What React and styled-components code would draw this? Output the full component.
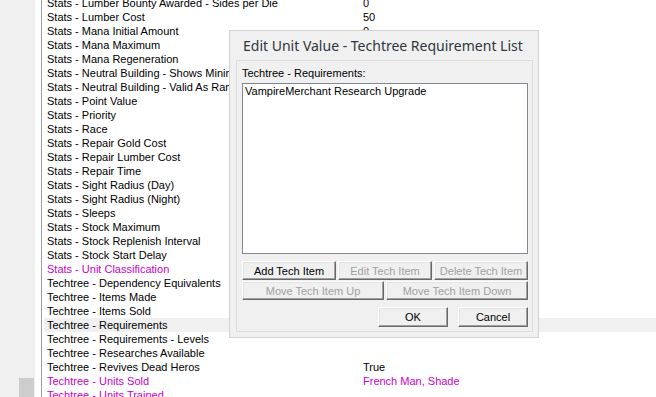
import React from 'react'
import styled, { createGlobalStyle } from 'styled-components'

const GlobalStyle = createGlobalStyle`
  html, body {
    margin: 0;
    padding: 0;
    background: #ffffff;
    overflow: hidden;
  }
  body {
    width: 656px;
    height: 397px;
    font-family: "Liberation Sans", Arial, sans-serif;
    font-size: 11px;
  }
`

const fields = [
  { name: 'Stats - Lumber Bounty Awarded - Sides per Die', value: '0' },
  { name: 'Stats - Lumber Cost', value: '50' },
  { name: 'Stats - Mana Initial Amount', value: '0' },
  { name: 'Stats - Mana Maximum' },
  { name: 'Stats - Mana Regeneration' },
  { name: 'Stats - Neutral Building - Shows Minimap Icon' },
  { name: 'Stats - Neutral Building - Valid As Random Building' },
  { name: 'Stats - Point Value' },
  { name: 'Stats - Priority' },
  { name: 'Stats - Race' },
  { name: 'Stats - Repair Gold Cost' },
  { name: 'Stats - Repair Lumber Cost' },
  { name: 'Stats - Repair Time' },
  { name: 'Stats - Sight Radius (Day)' },
  { name: 'Stats - Sight Radius (Night)' },
  { name: 'Stats - Sleeps' },
  { name: 'Stats - Stock Maximum' },
  { name: 'Stats - Stock Replenish Interval' },
  { name: 'Stats - Stock Start Delay' },
  { name: 'Stats - Unit Classification', changed: true },
  { name: 'Techtree - Dependency Equivalents' },
  { name: 'Techtree - Items Made' },
  { name: 'Techtree - Items Sold' },
  { name: 'Techtree - Requirements', selected: true },
  { name: 'Techtree - Requirements - Levels' },
  { name: 'Techtree - Researches Available' },
  { name: 'Techtree - Revives Dead Heros', value: 'True' },
  { name: 'Techtree - Units Sold', value: 'French Man, Shade', changed: true },
  { name: 'Techtree - Units Trained', changed: true },
]

const App = () => {
  return (
    <>
      <GlobalStyle />
      <Page>
        <LeftPane>
          <ScrollThumb />
        </LeftPane>
        <Spacer />
        <FieldList>
          {fields.map((f) => (
            <FieldRow key={f.name} $selected={f.selected} $changed={f.changed}>
              <FieldName>{f.name}</FieldName>
              <FieldValue>{f.value}</FieldValue>
            </FieldRow>
          ))}
        </FieldList>

        <Dialog>
          <Title>Edit Unit Value - Techtree Requirement List</Title>
          <Group>
            <Label>Techtree - Requirements:</Label>
            <ListBox>
              <ListItem>VampireMerchant Research Upgrade</ListItem>
            </ListBox>
            <ButtonRow $cols={3}>
              <Button>Add Tech Item</Button>
              <Button disabled>Edit Tech Item</Button>
              <Button disabled>Delete Tech Item</Button>
            </ButtonRow>
            <ButtonRow $cols={2} $tight>
              <Button disabled>Move Tech Item Up</Button>
              <Button disabled>Move Tech Item Down</Button>
            </ButtonRow>
            <Footer>
              <Button $wide>OK</Button>
              <Button $wide>Cancel</Button>
            </Footer>
          </Group>
        </Dialog>
      </Page>
    </>
  )
}

//=====================================
//    Styling of the Components
//=====================================

const Page = styled.div`
  position: relative;
  display: flex;
  width: 656px;
  height: 397px;
  overflow: hidden;
`

const LeftPane = styled.div`
  position: relative;
  width: 35px;
  flex: none;
  background: #f0f0f0;
`

// the scrollbar thumb of the left tree sits over its track
const ScrollThumb = styled.div`
  position: absolute;
  left: 19px;
  top: 378px;
  width: 15px;
  height: 30px;
  background: #cdcdcd;
`

const Spacer = styled.div`
  width: 6px;
  flex: none;
  background: #ffffff;
`

const FieldList = styled.div`
  flex: 1;
  display: flex;
  flex-direction: column;
  border-left: 1px solid #a0a0a0;
  padding-left: 2px;
  margin-top: -4px;
`

const FieldRow = styled.div`
  display: flex;
  height: 14px;
  line-height: 14px;
  padding-left: 3px;
  white-space: nowrap;
  color: ${(p) => (p.$changed ? '#c800c8' : '#000000')};
  background: ${(p) => (p.$selected ? '#f0f0f0' : 'transparent')};
`

const FieldName = styled.div`
  width: 316px;
  flex: none;
  overflow: hidden;
`

const FieldValue = styled.div`
  flex: 1;
`

const Dialog = styled.div`
  position: absolute;
  left: 229px;
  top: 30px;
  width: 308px;
  height: 306px;
  border: 1px solid #d2d2d2;
  background: #f0f0f0;
  display: flex;
  flex-direction: column;
`

const Title = styled.div`
  height: 29px;
  line-height: 29px;
  padding-left: 13px;
  font-family: "Noto Sans", "Open Sans", sans-serif;
  font-size: 14px;
  color: #2f3640;
  white-space: nowrap;
`

const Group = styled.div`
  margin: 0 5px 5px 6px;
  border: 1px solid #dcdcdc;
  padding: 5px 4px 4px 5px;
  display: flex;
  flex-direction: column;
`

const Label = styled.div`
  height: 14px;
  line-height: 14px;
  margin-bottom: 3px;
  color: #000;
`

const ListBox = styled.div`
  height: 169px;
  border: 1px solid #828790;
  background: #ffffff;
`

const ListItem = styled.div`
  height: 14px;
  line-height: 14px;
  padding-left: 2px;
  color: #000;
`

const ButtonRow = styled.div`
  display: grid;
  grid-template-columns: repeat(${(p) => p.$cols}, 1fr);
  gap: 2px;
  margin-top: ${(p) => (p.$tight ? '1px' : '7px')};
  width: 286px;
`

const Button = styled.button`
  height: ${(p) => (p.$wide ? '20px' : '19px')};
  width: ${(p) => (p.$wide ? '70px' : 'auto')};
  padding: 0;
  font-family: "Liberation Sans", Arial, sans-serif;
  font-size: 11px;
  color: #000;
  background: #f0f0f0;
  border: 1px solid;
  border-color: #ffffff #696969 #696969 #ffffff;
  box-shadow: inset -1px -1px #a0a0a0, inset 1px 1px #e3e3e3;
  border-radius: 0;

  &:disabled {
    color: #a0a0a0;
  }
`

const Footer = styled.div`
  display: flex;
  justify-content: flex-end;
  gap: 10px;
  margin-top: 7px;
  width: 286px;
`

export default App
